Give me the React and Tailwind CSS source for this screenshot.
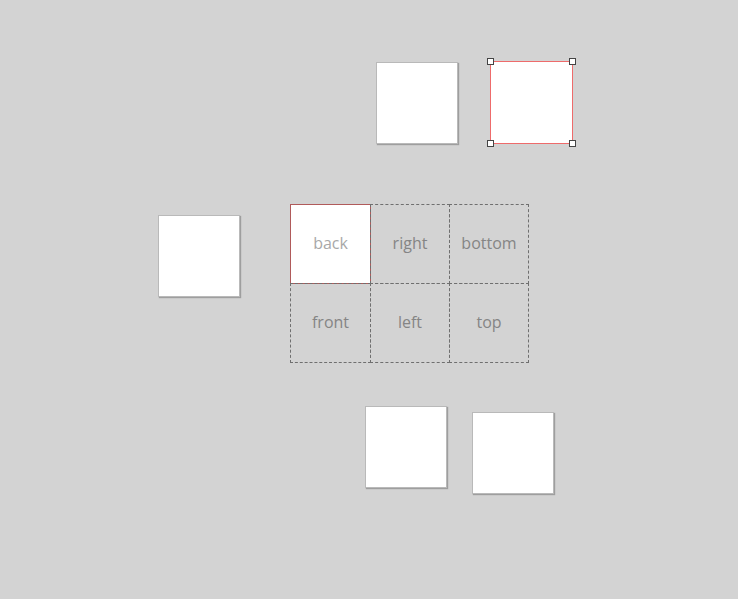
const cards = [
  { x: 376, y: 62 },
  { x: 158, y: 215 },
  { x: 365, y: 406 },
  { x: 472, y: 412 },
];

const faces = ['back', 'right', 'bottom', 'front', 'left', 'top'];

function Card({ x, y }) {
  return (
    <div
      className="absolute w-[82px] h-[82px] bg-white border border-[#b9b9b9] shadow-[1px_1px_1px_rgba(0,0,0,0.25)]"
      style={{ left: x, top: y }}
    />
  );
}

function Handle({ className }) {
  return <div className={`absolute w-[7px] h-[7px] bg-white border border-[#444] ${className}`} />;
}

export default function App() {
  return (
    <div className="relative w-[738px] h-[599px] bg-[#d3d3d3] overflow-hidden font-['Open_Sans',sans-serif]">
      {cards.map((c, i) => (
        <Card key={i} {...c} />
      ))}

      {/* selected card */}
      <div className="absolute left-[490px] top-[61px] w-[83px] h-[83px] bg-white border border-[#ee6b6b]">
        <Handle className="-left-[4px] -top-[4px]" />
        <Handle className="-right-[4px] -top-[4px]" />
        <Handle className="-left-[4px] -bottom-[4px]" />
        <Handle className="-right-[4px] -bottom-[4px]" />
      </div>

      {/* net of faces */}
      <div className="absolute left-[290px] top-[204px] grid grid-cols-[80px_79px_79px] grid-rows-[79px_79px]">
        {faces.map((f) => (
          <div
            key={f}
            className={`flex items-center justify-center pb-[2px] border border-dashed -mr-px -mb-px text-[16px] ${
              f === 'back'
                ? 'bg-white border-solid border-[#b05a5a] text-[#a8a8a8]'
                : 'border-[#6f6f6f] text-[#858585]'
            }`}
          >
            {f}
          </div>
        ))}
      </div>
    </div>
  );
}
